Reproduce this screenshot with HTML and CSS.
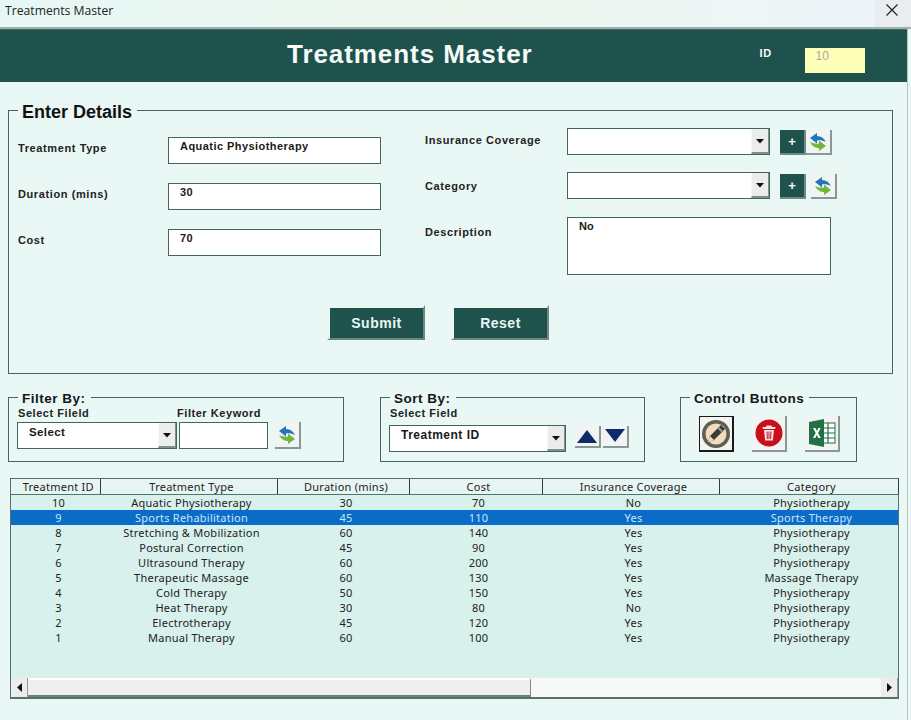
FILE: index.html
```html
<!DOCTYPE html>
<html lang="en">
<head>
<meta charset="utf-8">
<title>Treatments Master</title>
<link rel="stylesheet" href="styles.css">
</head>
<body>
<svg class="sprite" width="0" height="0" aria-hidden="true">
  <symbol id="refresh" viewBox="0 0 20 20">
    <path d="M2 6l7-5v3c4 0 7 2 9 6-3-1.500-6-2-9-1.500v3z" fill="#1f76b8"/>
    <path d="M18 14l-7 5v-3c-4 0-7-2-9-6 3 1.500 6 2 9 1.500v-3z" fill="#6fb63c"/>
  </symbol>
  <symbol id="caret" viewBox="0 0 10 6"><path d="M1 1h8L5 5.500z" fill="#111"/></symbol>
</svg>
<div class="window">
  <div class="titlebar">
    <span class="titlebar-text">Treatments Master</span>
    <span class="close">
      <svg width="14" height="14" viewBox="0 0 14 14"><path d="M1.500 1.500l11 11M12.500 1.500l-11 11" stroke="#222" stroke-width="1.200" fill="none"/></svg>
    </span>
  </div>
  <main class="main">
    <header class="banner">
      <h1 class="banner-title">Treatments Master</h1>
      <span class="banner-id">ID</span>
      <span class="banner-box">10</span>
    </header>

    <fieldset class="group details">
      <legend class="legend-large">Enter Details</legend>
      <div class="details-grid">
        <div class="col-left">
          <div class="row-left"><label class="label">Treatment Type</label><div class="field field-left">Aquatic Physiotherapy</div></div>
          <div class="row-left"><label class="label">Duration (mins)</label><div class="field field-left">30</div></div>
          <div class="row-left"><label class="label">Cost</label><div class="field field-left">70</div></div>
        </div>
        <div class="col-right">
          <div class="row-right">
            <label class="label label-right">Insurance Coverage</label>
            <div class="combo combo-wide"><span class="combo-text"></span><span class="drop"><svg width="10" height="6"><use href="#caret"/></svg></span></div>
            <button class="btn-plus">+</button>
            <button class="btn-icon"><svg width="20" height="20"><use href="#refresh"/></svg></button>
          </div>
          <div class="row-right row-cat">
            <label class="label label-right">Category</label>
            <div class="combo combo-wide"><span class="combo-text"></span><span class="drop"><svg width="10" height="6"><use href="#caret"/></svg></span></div>
            <button class="btn-plus">+</button>
            <button class="btn-icon btn-icon-gap"><svg width="20" height="20"><use href="#refresh"/></svg></button>
          </div>
          <div class="row-right row-desc">
            <label class="label label-right">Description</label>
            <div class="desc">No</div>
          </div>
        </div>
      </div>
      <div class="actions">
        <button class="btn-main">Submit</button>
        <button class="btn-main">Reset</button>
      </div>
    </fieldset>

    <div class="tools">
      <fieldset class="group tool-filter">
        <legend class="legend-small">Filter By:</legend>
        <div class="tool-labels">
          <span class="mini-label mini-a">Select Fileld</span>
          <span class="mini-label">Filter Keyword</span>
        </div>
        <div class="tool-row">
          <div class="combo combo-filter"><span class="combo-text">Select</span><span class="drop"><svg width="10" height="6"><use href="#caret"/></svg></span></div>
          <div class="keyword"></div>
          <button class="btn-icon btn-filter"><svg width="20" height="20"><use href="#refresh"/></svg></button>
        </div>
      </fieldset>
      <fieldset class="group tool-sort">
        <legend class="legend-small">Sort By:</legend>
        <div class="tool-labels"><span class="mini-label">Select Field</span></div>
        <div class="tool-row sort-row">
          <div class="combo combo-sort"><span class="combo-text">Treatment ID</span><span class="drop"><svg width="10" height="6"><use href="#caret"/></svg></span></div>
          <button class="btn-arrow btn-up"><svg width="22" height="16" viewBox="0 0 22 16"><path d="M1 15L11 2l10 13z" fill="#0e2a6b"/></svg></button>
          <button class="btn-arrow"><svg width="22" height="16" viewBox="0 0 22 16"><path d="M1 1l10 13L21 1z" fill="#0e2a6b"/></svg></button>
        </div>
      </fieldset>
      <fieldset class="group tool-control">
        <legend class="legend-small">Control Buttons</legend>
        <div class="control-row">
          <button class="btn-square btn-edit">
            <svg width="30" height="30" viewBox="0 0 30 30">
              <circle cx="15" cy="15" r="14" fill="#5f5f52"/>
              <circle cx="15" cy="15" r="10.500" fill="#f2dcc0"/>
              <path d="M7 23l2-6L20 6l4 4-11 11z" fill="#3a3a36"/>
              <path d="M9 17l4 4-6 2z" fill="#e8e0d0"/>
              <path d="M18 8l4 4-1.500 1.500-4-4z" fill="#9a9a90"/>
            </svg>
          </button>
          <button class="btn-square">
            <svg width="28" height="28" viewBox="0 0 28 28">
              <circle cx="14" cy="14" r="13.500" fill="#c80f1a"/>
              <path d="M7.500 8h13l-.5 2H8z" fill="#f6e6e6"/>
              <path d="M11 8l.6-1.500h4.800L17 8z" fill="#f6e6e6"/>
              <path d="M9 11h10l-1.200 10.500h-7.600z" fill="#f6e6e6"/>
              <path d="M12 12.500l.4 7.500M14 12.500V20M16 12.500l-.4 7.500" stroke="#c80f1a" stroke-width="1" fill="none"/>
            </svg>
          </button>
          <button class="btn-square">
            <svg width="30" height="30" viewBox="0 0 30 30">
              <rect x="14" y="5" width="14" height="20" fill="#fff" stroke="#1f7244" stroke-width="1"/>
              <path d="M14 10h14M14 15h14M14 20h14M21 5v20" stroke="#1f7244" stroke-width="1.200" fill="none"/>
              <path d="M2 4l15-3v28L2 26z" fill="#1f7244"/>
              <path d="M6 10h2.400l1.500 3 1.500-3h2.300l-2.600 5 2.700 5h-2.400l-1.500-3.100L8.300 20H6l2.700-5z" fill="#fff"/>
            </svg>
          </button>
        </div>
      </fieldset>
    </div>

    <div class="list">
      <table class="grid">
        <colgroup>
          <col class="c1"><col class="c2"><col class="c3"><col class="c4"><col class="c5"><col class="c6">
        </colgroup>
        <thead>
          <tr><th>Treatment ID</th><th>Treatment Type</th><th>Duration (mins)</th><th>Cost</th><th>Insurance Coverage</th><th>Category</th></tr>
        </thead>
        <tbody>
          <tr><td>10</td><td>Aquatic Physiotherapy</td><td>30</td><td>70</td><td>No</td><td>Physiotherapy</td></tr>
          <tr class="selected"><td>9</td><td>Sports Rehabilitation</td><td>45</td><td>110</td><td>Yes</td><td>Sports Therapy</td></tr>
          <tr><td>8</td><td>Stretching &amp; Mobilization</td><td>60</td><td>140</td><td>Yes</td><td>Physiotherapy</td></tr>
          <tr><td>7</td><td>Postural Correction</td><td>45</td><td>90</td><td>Yes</td><td>Physiotherapy</td></tr>
          <tr><td>6</td><td>Ultrasound Therapy</td><td>60</td><td>200</td><td>Yes</td><td>Physiotherapy</td></tr>
          <tr><td>5</td><td>Therapeutic Massage</td><td>60</td><td>130</td><td>Yes</td><td>Massage Therapy</td></tr>
          <tr><td>4</td><td>Cold Therapy</td><td>50</td><td>150</td><td>Yes</td><td>Physiotherapy</td></tr>
          <tr><td>3</td><td>Heat Therapy</td><td>30</td><td>80</td><td>No</td><td>Physiotherapy</td></tr>
          <tr><td>2</td><td>Electrotherapy</td><td>45</td><td>120</td><td>Yes</td><td>Physiotherapy</td></tr>
          <tr><td>1</td><td>Manual Therapy</td><td>60</td><td>100</td><td>Yes</td><td>Physiotherapy</td></tr>
        </tbody>
      </table>
      <div class="hscroll">
        <span class="sb-btn"><svg width="5" height="9" viewBox="0 0 5 9"><path d="M5 0v9L0 4.500z" fill="#111"/></svg></span>
        <span class="sb-thumb"></span>
        <span class="sb-track"></span>
        <span class="sb-btn"><svg width="5" height="9" viewBox="0 0 5 9"><path d="M0 0v9l5-4.500z" fill="#111"/></svg></span>
      </div>
    </div>
  </main>
</div>
</body>
</html>
```

FILE: styles.css
```css
* { box-sizing: border-box; }
html, body { margin: 0; padding: 0; }
body {
  width: 911px;
  height: 720px;
  overflow: hidden;
  background: #e9f7f5;
  font-family: "Liberation Sans", Arial, sans-serif;
  color: #1a1a1a;
}
.sprite { position: absolute; }
.window { width: 911px; height: 720px; display: flex; flex-direction: column; }

.titlebar {
  height: 29px;
  flex: none;
  display: flex;
  justify-content: space-between;
  background: linear-gradient(90deg, #e6f7f5, #eef6ee 50%, #edf5fb);
  border-bottom: 2px solid #a3adab;
}
.titlebar-text { font: 12.200px/21px "Open Sans", sans-serif; padding-left: 5px; color: #222; }
.close {
  width: 37px;
  height: 27px;
  background: #e9edf0;
  display: flex;
  align-items: center;
  justify-content: center;
  padding: 0 2px 7px 0;
}

.main { width: 908px; flex: 1; border-right: 1px solid #b9c4c2; }

.banner {
  height: 53px;
  background: #1f524c;
  display: flex;
  color: #f4fbf8;
  border-top: 1px solid #3c6a64;
}
.banner-title {
  margin: 0 0 0 287px;
  font-size: 26px;
  line-height: 48px;
  font-weight: 700;
  letter-spacing: .93px;
  white-space: nowrap;
}
.banner-id { margin-left: 227px; font-size: 11px; font-weight: 700; line-height: 46px; letter-spacing: .5px; }
.banner-box {
  margin: 18px 0 0 33px;
  width: 60px;
  height: 25px;
  background: #ffffb9;
  color: #a8a89a;
  font-size: 12px;
  line-height: 17px;
  padding-left: 11px;
}

.group {
  margin: 0;
  padding: 0;
  border: 1px solid #44645f;
  min-width: 0;
}
.details { margin: 16px 0 0 8px; width: 885px; height: 276px; }
.legend-large {
  margin-left: 9px;
  padding: 4px 5px 0 4px;
  font-size: 18px;
  line-height: 20px;
  font-weight: 700;
  color: #111;
}
.legend-small {
  margin-left: 9px;
  padding: 2px 5px 0 4px;
  font-size: 13.500px;
  line-height: 15px;
  font-weight: 700;
  letter-spacing: .5px;
  color: #161616;
}

.details-grid { display: flex; height: 183px; }
.col-left { width: 416px; padding: 15px 0 0 9px; }
.row-left { display: flex; height: 46px; }
.label {
  font-size: 11px;
  font-weight: 700;
  letter-spacing: .6px;
  color: #222;
  white-space: nowrap;
}
.row-left .label { width: 150px; line-height: 23px; }
.field {
  width: 213px;
  height: 27px;
  background: #fff;
  border: 1px solid #44645f;
  font-size: 11px;
  font-weight: 700;
  letter-spacing: .45px;
  line-height: 16px;
  padding-left: 11px;
}

.col-right { padding-top: 6px; }
.row-right { display: flex; height: 27px; align-items: flex-start; }
.row-cat { margin-top: 17px; }
.row-cat .label-right { line-height: 28px; }
.row-desc { margin-top: 18px; height: 58px; }
.label-right { width: 142px; line-height: 24px; }
.row-desc .label-right { line-height: 30px; }

.combo {
  display: flex;
  height: 27px;
  background: #fff;
  border: 1px solid #44645f;
  justify-content: space-between;
  font-size: 11px;
  font-weight: 700;
  letter-spacing: .4px;
}
.combo-wide { width: 203px; margin-right: 10px; }
.combo-text { line-height: 18px; padding-left: 11px; }
.drop {
  width: 18px;
  flex: none;
  background: #ececec;
  border-left: 1px solid #f8f8f8;
  border-right: 1px solid #7f8f8c;
  border-bottom: 2px solid #7f8f8c;
  display: flex;
  align-items: center;
  justify-content: center;
}
.desc {
  width: 264px;
  height: 58px;
  background: #fff;
  border: 1px solid #44645f;
  font-size: 11px;
  font-weight: 700;
  line-height: 16px;
  padding-left: 11px;
}

button { font-family: inherit; margin: 0; padding: 0; cursor: default; }
.btn-plus {
  width: 26px;
  height: 25px;
  margin-top: 2px;
  background: #1f524c;
  color: #fff;
  font-size: 13px;
  font-weight: 700;
  border: none;
  border-right: 2px solid #6f8a86;
  border-bottom: 2px solid #6f8a86;
}
.btn-icon {
  width: 26px;
  height: 25px;
  margin-top: 2px;
  background: #f1f4f3;
  border: none;
  border-right: 2px solid #889895;
  border-bottom: 2px solid #889895;
  display: flex;
  align-items: center;
  justify-content: center;
}
.btn-icon-gap { margin-left: 5px; }

.actions { display: flex; justify-content: flex-start; gap: 26px; padding-left: 318px; }
.btn-main {
  width: 98px;
  height: 35px;
  background: #1f524c;
  color: #e9f7f3;
  font-size: 14px;
  font-weight: 700;
  letter-spacing: .5px;
  border: none;
  border-top: 3px solid #e9f7f5;
  border-right: 2px solid #71857f;
  border-bottom: 2px solid #71857f;
  border-left: 3px solid #e9f7f5;
}

.tools { display: flex; margin: 15px 0 0 8px; height: 73px; }
.tool-filter { width: 336px; height: 73px; }
.tool-sort { width: 265px; height: 73px; margin-left: 36px; }
.tool-control { width: 177px; height: 73px; margin-left: 35px; }
.tool-labels { display: flex; padding-left: 9px; height: 16px; }
.mini-label { font-size: 11px; font-weight: 700; letter-spacing: .55px; line-height: 15px; color: #222; }
.mini-a { width: 159px; }
.tool-row { display: flex; padding-left: 8px; align-items: flex-start; }
.combo-filter { width: 160px; margin-right: 2px; font-size: 11.500px; }
.keyword { width: 89px; height: 27px; background: #fff; border: 1px solid #44645f; }
.btn-filter { width: 26px; height: 27px; margin: 0 0 0 7px; }
.sort-row { padding-top: 3px; }
.combo-sort { width: 177px; margin-right: 9px; font-size: 12px; letter-spacing: .5px; }
.btn-arrow {
  width: 26px;
  height: 22px;
  margin-top: 1px;
  background: #f1f4f3;
  border: none;
  border-right: 2px solid #889895;
  border-bottom: 2px solid #889895;
  display: flex;
  align-items: center;
  justify-content: center;
}
.btn-up { margin-right: 2px; }
.control-row { display: flex; gap: 18px; padding: 10px 0 0 18px; }
.btn-square {
  width: 35px;
  height: 36px;
  background: #f1f4f3;
  border: none;
  border-right: 2px solid #889895;
  border-bottom: 2px solid #889895;
  display: flex;
  align-items: center;
  justify-content: center;
}
.btn-edit { border: 1px solid #1a1a1a; border-right-width: 2px; border-bottom-width: 2px; }

.list {
  margin: 16px 0 0 10px;
  width: 889px;
  height: 221px;
  background: #d9f1ec;
  border: 1px solid #54726d;
  border-bottom-width: 2px;
  display: flex;
  flex-direction: column;
  justify-content: space-between;
}
.grid {
  width: 887px;
  border-collapse: collapse;
  table-layout: fixed;
  font-family: "Noto Sans", sans-serif;
  font-size: 11px;
  letter-spacing: .25px;
  color: #222;
}
.c1 { width: 89px; }
.c2 { width: 177px; }
.c3 { width: 132px; }
.c4 { width: 133px; }
.c5 { width: 177px; }
.c6 { width: 179px; }
.grid th {
  height: 15px;
  padding: 0 0 0 6px;
  background: #e7f5f2;
  font-weight: 400;
  line-height: 15px;
  border-right: 1px solid #2c3f3c;
  border-bottom: 1px solid #54726d;
  white-space: nowrap;
  overflow: hidden;
}
.grid td {
  height: 15px;
  padding: 0 0 0 6px;
  text-align: center;
  line-height: 15px;
  white-space: nowrap;
}
.selected td { background: #0b6cc7; color: #c6e6ff; }

.hscroll { display: flex; height: 19px; }
.sb-btn {
  width: 17px;
  flex: none;
  background: #ececec;
  border-right: 1px solid #9a9a9a;
  display: flex;
  align-items: center;
  justify-content: center;
}
.sb-thumb {
  width: 503px;
  flex: none;
  background: #efefef;
  border-top: 2px solid #fff;
  border-right: 1px solid #8a8a8a;
  border-bottom: 2px solid #6f7f7c;
}
.sb-track { flex: 1; background: #f7f8f8; }
```
